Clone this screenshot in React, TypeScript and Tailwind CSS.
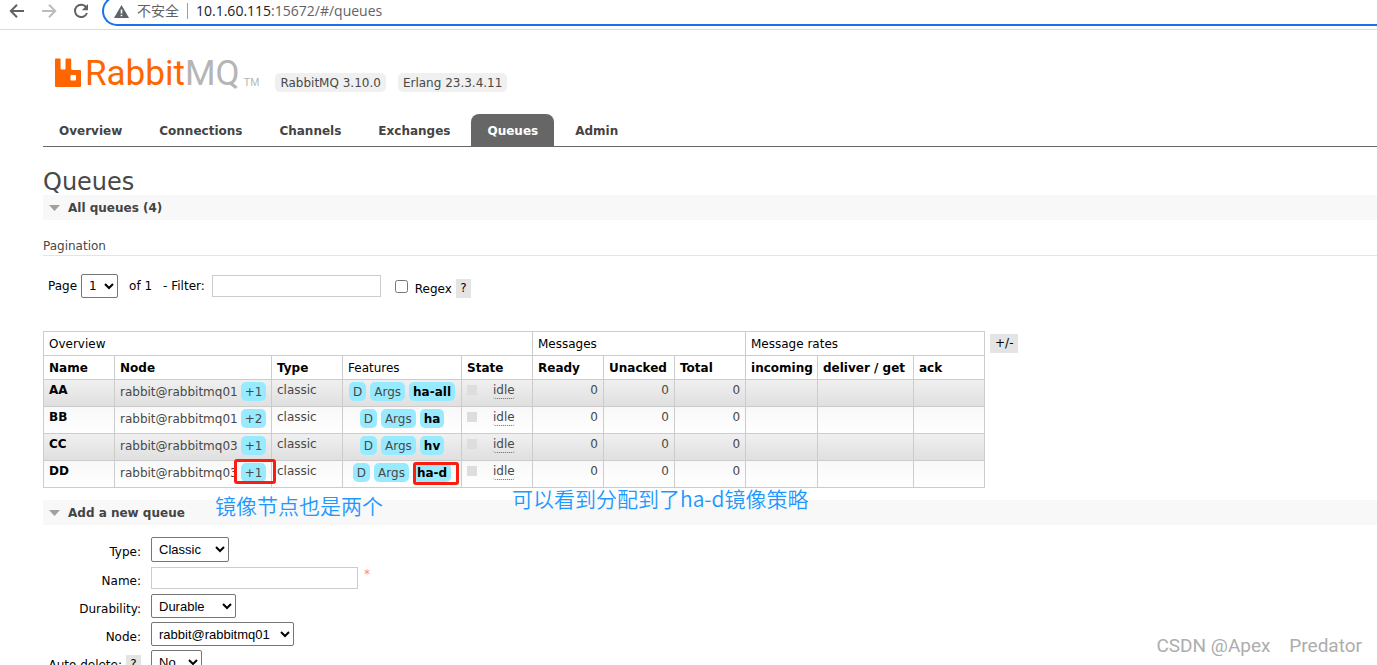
import type { ReactNode } from "react";

const tabs = ["Overview", "Connections", "Channels", "Exchanges", "Queues", "Admin"];

type Queue = { name: string; node: string; mirrors: string; policy: string };

const queues: Queue[] = [
  { name: "AA", node: "rabbit@rabbitmq01", mirrors: "+1", policy: "ha-all" },
  { name: "BB", node: "rabbit@rabbitmq01", mirrors: "+2", policy: "ha" },
  { name: "CC", node: "rabbit@rabbitmq03", mirrors: "+1", policy: "hv" },
  { name: "DD", node: "rabbit@rabbitmq03", mirrors: "+1", policy: "ha-d" },
];

function BrowserBar() {
  return (
    <div className="flex h-[30px] shrink-0 items-end overflow-hidden border-b border-[#dadce0] pb-[3px] font-['Open_Sans','Noto_Sans_CJK_SC',sans-serif] text-sm">
      <div className="flex h-[30px] items-center gap-4 pl-[9px]">
        <button aria-label="Back" className="text-[#5f6368]">
          <svg width="16" height="16" viewBox="0 0 16 16" fill="none" stroke="currentColor" strokeWidth="2">
            <path d="M15 8H2.5M8 1.8 1.8 8 8 14.2" />
          </svg>
        </button>
        <button aria-label="Forward" className="text-[#babcbe]">
          <svg width="16" height="16" viewBox="0 0 16 16" fill="none" stroke="currentColor" strokeWidth="2">
            <path d="M1 8h12.500M8 1.800 14.200 8 8 14.200" />
          </svg>
        </button>
        <button aria-label="Reload" className="text-[#5f6368]">
          <svg width="16" height="16" viewBox="0 0 16 16">
            <path d="M13.200 4.200A6.200 6.200 0 1 0 14 10" fill="none" stroke="currentColor" strokeWidth="2" />
            <path d="M15 1v6.200H8.800z" fill="currentColor" />
          </svg>
        </button>
      </div>
      <div className="ml-[13px] flex h-[30px] flex-1 items-center rounded-l-full border-2 border-r-0 border-[#1a73e8] pl-[10px]">
        <svg width="15" height="13" viewBox="0 0 15 13" className="shrink-0">
          <path d="M7.500 0 15 13H0z" fill="#5f6368" />
          <path d="M6.700 4.500h1.600v4H6.700zM6.700 9.700h1.600v1.600H6.700z" fill="#fff" />
        </svg>
        <span className="ml-2 text-[#5f6368]">不安全</span>
        <span className="mx-2 h-4 w-px bg-[#9aa0a6]" />
        <span className="text-[#5f6368]">
          <span className="text-[#202124]">10.1.60.115</span>:15672/#/queues
        </span>
      </div>
    </div>
  );
}

function Logo() {
  return (
    <a href="#/" aria-label="RabbitMQ" className="flex h-[34px] items-end">
      <svg width="27" height="29" viewBox="0 0 27 29" className="mb-[3px] shrink-0">
        <path
          fill="#f60"
          fillRule="evenodd"
          d="M1 0.500h3.600q1 0 1 1v9q0 1 1 1h2.900q1 0 1-1v-9q0-1 1-1h3.700q1 0 1 1v9.500q0 1 1 1H25q1 0 1 1V28q0 1-1 1H1q-1 0-1-1V1.500q0-1 1-1zM15.500 18v3.500q0 1 1 1h3.500q1 0 1-1V18q0-1-1-1h-3.500q-1 0-1 1z"
        />
      </svg>
      <span className="ml-[3px] font-['Roboto',sans-serif] text-[35px] leading-8 text-[#f60]">
        Rabbit<span className="text-[#b5b5b5]">MQ</span>
      </span>
      <span className="ml-1 font-['Liberation_Sans',sans-serif] text-[11px] leading-4 text-[#b5b5b5]">TM</span>
    </a>
  );
}

function VersionChip({ children }: { children: ReactNode }) {
  return <span className="rounded-[5px] bg-[#f0f0f0] px-[5px] pt-px leading-[18px] text-[#484848]">{children}</span>;
}

function Badge({ children }: { children: ReactNode }) {
  return <span className="rounded-[5px] bg-[#98ebff] px-1 pt-px leading-[18px]">{children}</span>;
}

function Help({ label }: { label: string }) {
  return (
    <button aria-label={label} className="w-[15px] bg-[#e4e4e4] leading-[19px] text-black">
      ?
    </button>
  );
}

function SectionHeading({ children }: { children: ReactNode }) {
  return (
    <h2 className="flex h-[25px] items-center gap-2 bg-[#f8f8f8] pl-[6px] font-bold text-[#444]">
      <svg width="11" height="6" viewBox="0 0 11 6">
        <path d="M0 0h11L5.500 6z" fill="#a0a0a0" />
      </svg>
      {children}
    </h2>
  );
}

function Pagination() {
  return (
    <>
      <h3 className="mt-[17px] border-b border-[#e4e4e4] leading-[18px] text-[#484848]">Pagination</h3>
      <div className="mt-[18px] flex h-6 items-center pl-[5px] text-black">
        <label htmlFor="page">Page</label>
        <select
          id="page"
          className="ml-1 h-6 w-[37px] rounded-[2px] border border-[#767676] bg-white pl-[3px]"
        >
          <option>1</option>
        </select>
        <span className="ml-[11px]">of 1</span>
        <label htmlFor="filter" className="ml-[11px]">
          - Filter:
        </label>
        <input id="filter" type="text" className="ml-[7px] h-[22px] w-[169px] border border-[#ccc]" />
        <input id="regex" type="checkbox" className="ml-[14px] size-[13px]" />
        <label htmlFor="regex" className="mt-[6px] ml-[7px]">
          Regex
        </label>
        <span className="mt-1 ml-1 flex">
          <Help label="Regex help" />
        </span>
      </div>
    </>
  );
}

const group = "border border-[#ccc] px-[5px] text-left font-normal";
const head = "border border-[#ccc] px-[5px] text-left font-bold whitespace-nowrap";
const cell = "border border-[#ccc] px-[5px] pt-[2px] align-top";
const count = "border border-[#ccc] px-[5px] pt-[2px] text-right align-top";

function QueueTable() {
  return (
    <div className="mt-[33px] flex items-start gap-[5px]">
      <table className="w-[942px] table-fixed border-collapse leading-4 text-[#484848]">
        <colgroup>
          <col className="w-[71px]" />
          <col className="w-[157px]" />
          <col className="w-[71px]" />
          <col className="w-[119px]" />
          <col className="w-[71px]" />
          <col className="w-[71px]" />
          <col className="w-[71px]" />
          <col className="w-[71px]" />
          <col className="w-[72px]" />
          <col className="w-[96px]" />
          <col className="w-[71px]" />
        </colgroup>
        <thead className="text-black">
          <tr className="h-6">
            <th colSpan={5} className={group}>Overview</th>
            <th colSpan={3} className={group}>Messages</th>
            <th colSpan={3} className={group}>Message rates</th>
          </tr>
          <tr className="h-6">
            <th className={head}>Name</th>
            <th className={head}>Node</th>
            <th className={head}>Type</th>
            <th className={group}>Features</th>
            <th className={head}>State</th>
            <th className={head}>Ready</th>
            <th className={head}>Unacked</th>
            <th className={head}>Total</th>
            <th className={head}>incoming</th>
            <th className={head}>deliver / get</th>
            <th className={head}>ack</th>
          </tr>
        </thead>
        <tbody>
          {queues.map((q) => (
            <tr
              key={q.name}
              className="h-[27px] odd:bg-linear-to-b odd:from-[#f0f0f0] odd:to-[#dfdfdf] even:bg-linear-to-b even:from-[#f8f8f8] even:to-white"
            >
              <td className={cell}>
                <a href={`#/queues/${q.name}`} className="font-bold text-black">{q.name}</a>
              </td>
              <td className={cell}>
                <div className="flex gap-[3px]">
                  <span className="pt-px leading-[18px]">{q.node}</span>
                  <Badge>{q.mirrors}</Badge>
                </div>
              </td>
              <td className={cell}>classic</td>
              <td className={cell}>
                <div className="flex justify-center gap-1">
                  <Badge>D</Badge>
                  <Badge>Args</Badge>
                  <Badge>
                    <a href="#/policies" className="font-bold text-black">{q.policy}</a>
                  </Badge>
                </div>
              </td>
              <td className={cell}>
                <div className="flex items-start gap-4">
                  <span className="mt-[3px] size-[10px] bg-[#ddd]" />
                  <span className="rounded-[3px] border-b border-dotted border-[#666] leading-4">idle</span>
                </div>
              </td>
              <td className={count}>0</td>
              <td className={count}>0</td>
              <td className={count}>0</td>
              <td className={count} />
              <td className={count} />
              <td className={count} />
            </tr>
          ))}
        </tbody>
      </table>
      <button className="mt-[3px] bg-[#e4e4e4] px-[5px] leading-[19px] text-black">+/-</button>
    </div>
  );
}

const select = "rounded-[2px] border border-[#767676] bg-white pl-[3px] font-['Liberation_Sans',sans-serif] text-[13px] text-black";
const label = "flex items-center justify-end gap-1 pt-[5px]";

function NewQueueForm() {
  return (
    <form className="mt-3 grid grid-cols-[98px_1fr] gap-x-[10px] gap-y-1 text-black">
      <label htmlFor="type" className={label}>Type:</label>
      <div className="flex">
        <select id="type" className={`${select} h-[25px] w-[78px]`}>
          <option>Classic</option>
        </select>
      </div>
      <label htmlFor="name" className={label}>Name:</label>
      <div className="flex h-6 items-center gap-[6px]">
        <input id="name" type="text" className="h-[22px] w-[207px] border border-[#ccc]" />
        <span className="self-start text-[#f88]">*</span>
      </div>
      <label htmlFor="durability" className={label}>Durability:</label>
      <div className="flex">
        <select id="durability" className={`${select} h-6 w-[85px]`}>
          <option>Durable</option>
        </select>
      </div>
      <label htmlFor="node" className={label}>Node:</label>
      <div className="flex">
        <select id="node" className={`${select} h-6 w-[143px]`}>
          <option>rabbit@rabbitmq01</option>
        </select>
      </div>
      <div className={label}>
        <label htmlFor="autodelete" className="whitespace-nowrap">Auto delete:</label>
        <Help label="Auto delete help" />
      </div>
      <div className="flex">
        <select id="autodelete" className={`${select} h-6 w-[51px]`}>
          <option>No</option>
        </select>
      </div>
    </form>
  );
}

function Annotations() {
  const note = "absolute font-['Noto_Sans_CJK_SC',sans-serif] text-[21px] leading-7 font-[350] whitespace-nowrap text-[#1e98ff]";
  return (
    <>
      <div className="absolute top-[459px] left-[234px] h-[25px] w-[42px] rounded-[3px] border-3 border-[#fb1d10]" />
      <div className="absolute top-[462px] left-[413px] h-[23px] w-[46px] rounded-[3px] border-3 border-[#fb1d10]" />
      <p className={`${note} top-[491px] left-[215px]`}>镜像节点也是两个</p>
      <p className={`${note} top-[484px] left-[512px]`}>可以看到分配到了ha-d镜像策略</p>
      <p className="absolute right-[15px] bottom-[7px] font-['Roboto',sans-serif] text-[19px] leading-6 whitespace-pre text-[#adadad]">
        CSDN @Apex{"\u00a0\u00a0\u00a0\u00a0"}Predator
      </p>
    </>
  );
}

export default function App() {
  return (
    <div className="relative flex h-screen flex-col overflow-hidden bg-white font-['DejaVu_Sans',Verdana,sans-serif] text-xs">
      <BrowserBar />
      <header className="ml-[43px] border-b border-[#666]">
        <div className="flex h-[84px] items-start gap-4 pt-[26px] pl-3">
          <Logo />
          <div className="mt-[17px] flex gap-3">
            <VersionChip>RabbitMQ 3.10.0</VersionChip>
            <VersionChip>Erlang 23.3.4.11</VersionChip>
          </div>
        </div>
        <nav className="flex gap-[5px]">
          {tabs.map((t) => (
            <a
              key={t}
              href={`#/${t.toLowerCase()}`}
              className={
                t === "Queues"
                  ? "rounded-t-lg bg-[#666] px-4 pt-[2px] leading-[30px] font-bold text-white"
                  : "px-4 pt-[2px] leading-[30px] font-bold text-[#444]"
              }
            >
              {t}
            </a>
          ))}
        </nav>
      </header>
      <main className="pl-[43px]">
        <h1 className="mt-5 pt-[2px] text-2xl leading-[26px] text-[#484848]">Queues</h1>
        <SectionHeading>All queues (4)</SectionHeading>
        <Pagination />
        <QueueTable />
        <div className="mt-3">
          <SectionHeading>Add a new queue</SectionHeading>
        </div>
        <NewQueueForm />
      </main>
      <Annotations />
    </div>
  );
}
